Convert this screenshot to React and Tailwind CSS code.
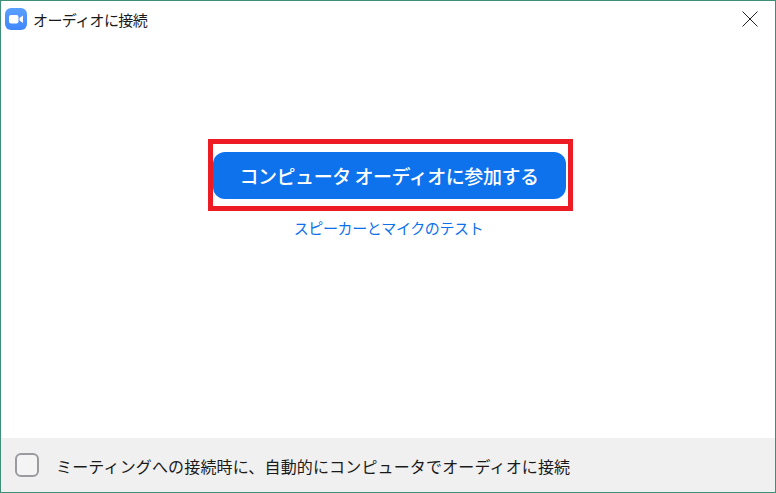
import React from 'react'

const font = "font-['Noto_Sans_CJK_JP','Noto_Sans_CJK_SC',sans-serif]"

const App = () => {
  return (
    <div className={`w-[776px] h-[493px] flex flex-col bg-white border border-[#3f8f78] ${font}`}>
      <div className="h-[35px] flex items-center pl-[4px] pr-[17px]">
        <svg width="22" height="22" viewBox="0 0 22 22">
          <defs>
            <linearGradient id="zoomBg" x1="0" y1="0" x2="0" y2="1">
              <stop offset="0" stopColor="#5aa0ff" />
              <stop offset="1" stopColor="#3f86fb" />
            </linearGradient>
          </defs>
          <rect width="22" height="22" rx="6" fill="url(#zoomBg)" />
          <rect x="4" y="7" width="9.5" height="8.5" rx="2" fill="#fff" />
          <path d="M14.5 10 L18 7.5 V15 L14.5 12.5 Z" fill="#fff" />
        </svg>
        <span className="ml-[6px] mt-[1px] text-[15px] leading-none tracking-[-0.6px] text-[#1a1a1a]">オーディオに接続</span>
        <svg className="ml-auto" width="16" height="16" viewBox="0 0 16 16">
          <path d="M0.5 0.5 L15.5 15.5 M15.5 0.5 L0.5 15.5" stroke="#222" strokeWidth="1" fill="none" />
        </svg>
      </div>

      <div className="flex-1 flex flex-col items-center pt-[103px]">
        <div className="border-[5px] border-[#ed1c24] pt-[8px] pb-[6px] ml-[5px] mr-[1px] w-[365px] h-[72px] flex">
          <button className="w-[353px] h-[47px] rounded-[12px] bg-[#0e72ed] text-white text-[19px] font-medium leading-none tracking-[-0.47px]">
            コンピュータ オーディオに参加する
          </button>
        </div>
        <a className="mt-[5px] ml-[1px] text-[15px] leading-[24px] tracking-[-0.4px] text-[#0e71eb]">スピーカーとマイクのテスト</a>
      </div>

      <div className="h-[54px] bg-[#f0f0f0] flex items-center pl-[14px]">
        <span className="w-[24px] h-[24px] rounded-[6px] border-2 border-[#9b9b9f] bg-[#f4f4f4]" />
        <span className="ml-[17px] mt-[1px] text-[16px] leading-none tracking-[0.15px] text-[#1a1a1a]">ミーティングへの接続時に、自動的にコンピュータでオーディオに接続</span>
      </div>
    </div>
  )
}

export default App
